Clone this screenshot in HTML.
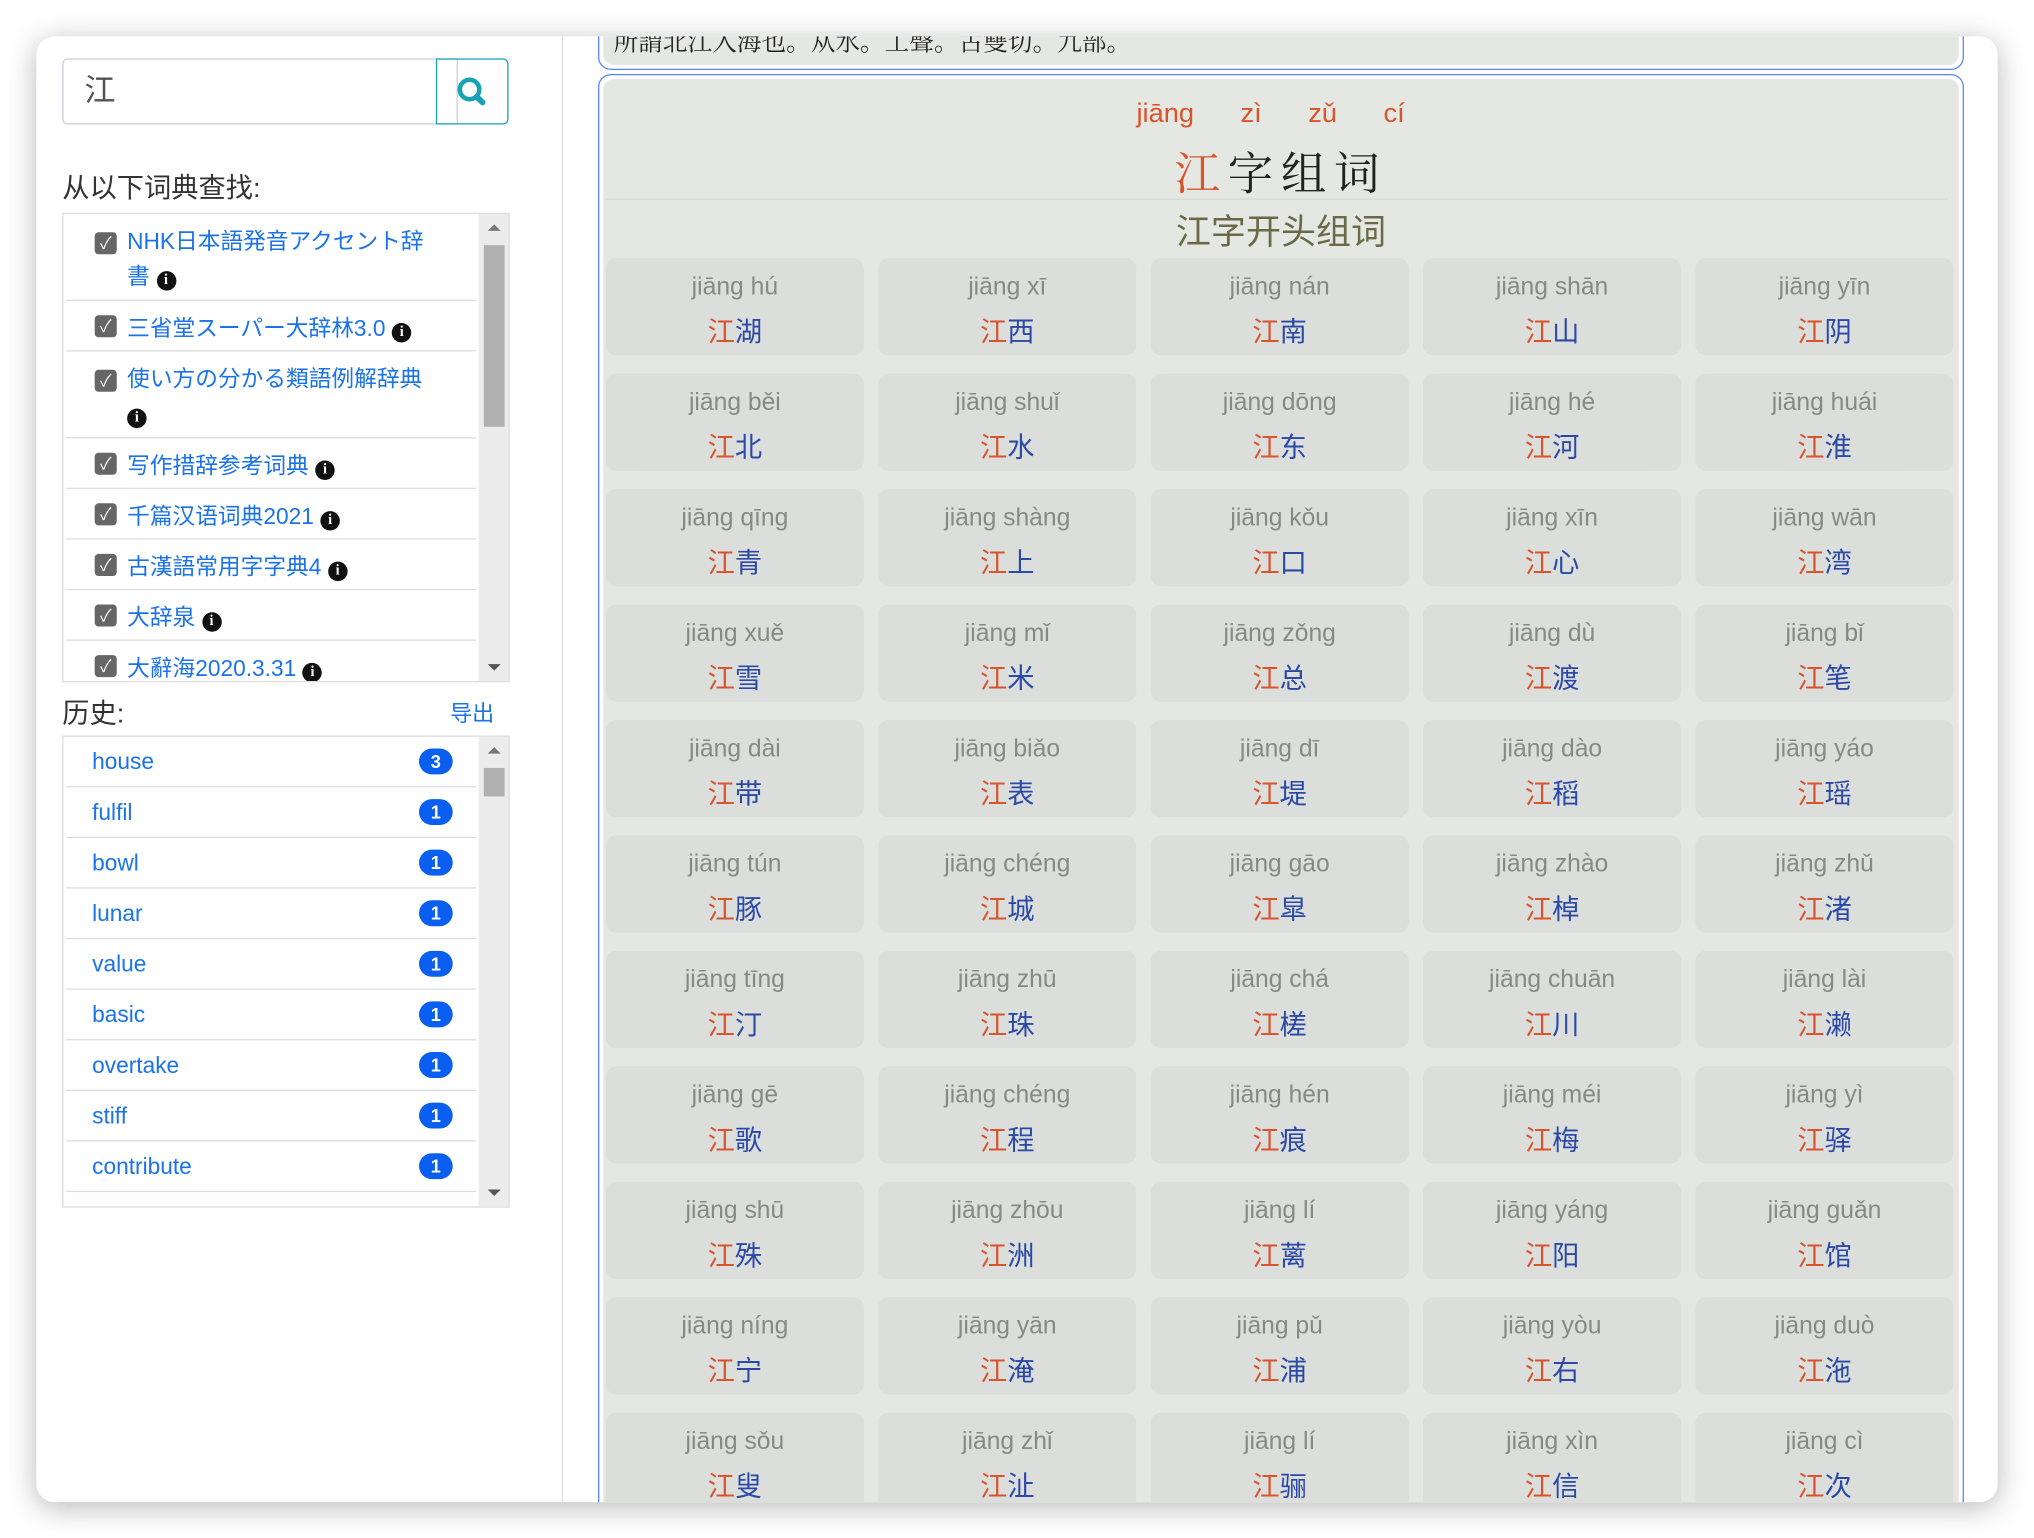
<!DOCTYPE html>
<html><head><meta charset="utf-8">
<style>
html,body{margin:0;padding:0;background:#fff;width:2034px;height:1538px;overflow:hidden}
#s{position:absolute;left:0;top:0;width:1568px;height:1186px;transform:scale(1.29719);transform-origin:0 0;font-family:"Liberation Sans","Noto Sans CJK SC",sans-serif}
.win{position:absolute;left:28px;top:28px;width:1512px;height:1130px;background:#fff;border-radius:14px;box-shadow:0 4px 22px rgba(0,0,0,.28);overflow:hidden}
.left{position:absolute;left:0;top:0;width:405px;height:100%;border-right:1px solid #e2e2e2}
.inp{position:absolute;left:20px;top:17px;width:287px;height:49px;border:1px solid #ccd;border-radius:4px 0 0 4px;font-size:24px;line-height:49px;padding-left:16px;color:#555}
.btn{position:absolute;left:308px;top:17px;width:54px;height:49px;border:1px solid #17a2b8;border-radius:0 4px 4px 0}
.lbl{position:absolute;font-size:21px;color:#333}
.box{position:absolute;left:20px;width:343px;border:1px solid #ddd;background:#fff;overflow:hidden}
.sb{position:absolute;right:0;top:0;width:23px;height:100%;background:#ececec}
.row{position:absolute;left:2px;width:316px;border-bottom:1px solid #ddd;color:#1a73e8;font-size:17.5px}
.cb{position:absolute;left:22px;width:17px;height:17px;background:#666;border-radius:3px;color:#fff;font-size:13px;text-align:center;line-height:17px}
.i{display:inline-block;width:15px;height:15px;border-radius:50%;background:#111;color:#fff;font:bold 11px/15px "Liberation Serif",serif;text-align:center;vertical-align:0px;margin-left:5px}
.bd{position:absolute;left:272px;width:26px;height:20px;border-radius:10px;background:#0a5ef0;color:#fff;font:bold 14px/20px "Liberation Sans",sans-serif;text-align:center}
.card{position:absolute;left:433px;width:1053px;border:1.5px solid #5a86ec;border-radius:10px;background:#fff;padding:3px;box-sizing:border-box}
.in{background:#e5e8e2;border-radius:8px;height:100%;position:relative}
.cell{position:absolute;width:199px;height:75px;background:#dcdedb;border-radius:8px;text-align:center}
.py{position:absolute;top:12px;left:0;right:0;color:#888;font-size:19px}
.w{position:absolute;top:41px;left:0;right:0;font-size:21px;color:#2b4aa8}
.w b{font-weight:normal;color:#d9532c}
</style></head><body><div id="s">
<div class="win">
 <div class="left">
  <div class="inp">江</div>
  <div class="btn"><svg width="54" height="49" viewBox="0 0 54 49"><circle cx="25" cy="23" r="7.5" fill="none" stroke="#17a2b8" stroke-width="3.5"/><line x1="30.5" y1="28.5" x2="35" y2="33" stroke="#17a2b8" stroke-width="4.5" stroke-linecap="round"/></svg></div>
  <div class="lbl" style="left:20px;top:101px">从以下词典查找:</div>
  <div class="box" style="top:136px;height:360px">
   <div class="row" style="top:0;height:66px"><div class="cb" style="top:14px">✓</div><div style="position:absolute;left:47px;top:8px;width:240px;line-height:27px">NHK日本語発音アクセント辞書<span class="i">i</span></div></div>
   <div class="row" style="top:67px;height:38px"><div class="cb" style="top:11px">✓</div><div style="position:absolute;left:47px;top:8px;white-space:nowrap">三省堂スーパー大辞林3.0<span class="i">i</span></div></div>
   <div class="row" style="top:106px;height:66px"><div class="cb" style="top:14px">✓</div><div style="position:absolute;left:47px;top:8px;width:250px;line-height:27px">使い方の分かる類語例解辞典<br><span class="i" style="margin-left:0">i</span></div></div>
   <div class="row" style="top:173px;height:38px"><div class="cb" style="top:11px">✓</div><div style="position:absolute;left:47px;top:8px;white-space:nowrap">写作措辞参考词典<span class="i">i</span></div></div>
   <div class="row" style="top:212px;height:38px"><div class="cb" style="top:11px">✓</div><div style="position:absolute;left:47px;top:8px;white-space:nowrap">千篇汉语词典2021<span class="i">i</span></div></div>
   <div class="row" style="top:251px;height:38px"><div class="cb" style="top:11px">✓</div><div style="position:absolute;left:47px;top:8px;white-space:nowrap">古漢語常用字字典4<span class="i">i</span></div></div>
   <div class="row" style="top:290px;height:38px"><div class="cb" style="top:11px">✓</div><div style="position:absolute;left:47px;top:8px;white-space:nowrap">大辞泉<span class="i">i</span></div></div>
   <div class="row" style="top:329px;height:38px"><div class="cb" style="top:11px">✓</div><div style="position:absolute;left:47px;top:8px;white-space:nowrap">大辭海2020.3.31<span class="i">i</span></div></div>
   <div class="sb"><div style="position:absolute;left:4px;top:24px;width:16px;height:140px;background:#b0b0b0"></div><div style="position:absolute;left:7px;top:8px;border:5px solid transparent;border-bottom:5px solid #777;border-top:0"></div><div style="position:absolute;left:7px;bottom:8px;border:5px solid transparent;border-top:5px solid #555;border-bottom:0"></div></div>
  </div>
  <div class="lbl" style="left:20px;top:506px">历史:</div>
  <div style="position:absolute;left:319px;top:508px;font-size:17px;color:#1a73e8">导出</div>
  <div class="box" style="top:539px;height:362px">
   <div class="row" style="top:0;height:38px"><span style="position:absolute;left:20px;top:9px">house</span><div class="bd" style="top:9px">3</div></div>
   <div class="row" style="top:39px;height:38px"><span style="position:absolute;left:20px;top:9px">fulfil</span><div class="bd" style="top:9px">1</div></div>
   <div class="row" style="top:78px;height:38px"><span style="position:absolute;left:20px;top:9px">bowl</span><div class="bd" style="top:9px">1</div></div>
   <div class="row" style="top:117px;height:38px"><span style="position:absolute;left:20px;top:9px">lunar</span><div class="bd" style="top:9px">1</div></div>
   <div class="row" style="top:156px;height:38px"><span style="position:absolute;left:20px;top:9px">value</span><div class="bd" style="top:9px">1</div></div>
   <div class="row" style="top:195px;height:38px"><span style="position:absolute;left:20px;top:9px">basic</span><div class="bd" style="top:9px">1</div></div>
   <div class="row" style="top:234px;height:38px"><span style="position:absolute;left:20px;top:9px">overtake</span><div class="bd" style="top:9px">1</div></div>
   <div class="row" style="top:273px;height:38px"><span style="position:absolute;left:20px;top:9px">stiff</span><div class="bd" style="top:9px">1</div></div>
   <div class="row" style="top:312px;height:38px"><span style="position:absolute;left:20px;top:9px">contribute</span><div class="bd" style="top:9px">1</div></div>
   <div class="sb"><div style="position:absolute;left:4px;top:24px;width:16px;height:22px;background:#b0b0b0"></div><div style="position:absolute;left:7px;top:8px;border:5px solid transparent;border-bottom:5px solid #777;border-top:0"></div><div style="position:absolute;left:7px;bottom:8px;border:5px solid transparent;border-top:5px solid #555;border-bottom:0"></div></div>
  </div>
 </div>
 <div class="card" style="top:-30px;height:56px"><div class="in"><div style="position:absolute;left:8px;top:16px;font-size:19px;color:#222;font-family:'Noto Serif CJK SC',serif">所謂北江入海也。从水。工聲。古雙切。九部。</div></div></div>
 <div class="card" style="top:29px;height:1140px"><div class="in">
  <div style="position:absolute;left:0;right:16px;top:15px;text-align:center;color:#d9532c;font-size:21px;word-spacing:30px">jiāng zì zǔ cí</div>
  <div style="position:absolute;left:0;right:0;top:46px;text-align:center;font-size:35px;letter-spacing:6px;color:#222;font-family:'Noto Serif CJK SC',serif"><span style="color:#d9532c">江</span>字组词</div>
  <div style="position:absolute;left:2px;right:8px;top:92px;border-top:1px solid #d6d8d3"></div>
  <div style="position:absolute;left:0;right:0;top:96px;text-align:center;font-size:27px;color:#6a6a48">江字开头组词</div>
  <div id="g"></div>
 </div></div>
</div>
</div>
<script>
var d=[["jiāng hú","湖"],["jiāng xī","西"],["jiāng nán","南"],["jiāng shān","山"],["jiāng yīn","阴"],
["jiāng běi","北"],["jiāng shuǐ","水"],["jiāng dōng","东"],["jiāng hé","河"],["jiāng huái","淮"],
["jiāng qīng","青"],["jiāng shàng","上"],["jiāng kǒu","口"],["jiāng xīn","心"],["jiāng wān","湾"],
["jiāng xuě","雪"],["jiāng mǐ","米"],["jiāng zǒng","总"],["jiāng dù","渡"],["jiāng bǐ","笔"],
["jiāng dài","带"],["jiāng biǎo","表"],["jiāng dī","堤"],["jiāng dào","稻"],["jiāng yáo","瑶"],
["jiāng tún","豚"],["jiāng chéng","城"],["jiāng gāo","皐"],["jiāng zhào","棹"],["jiāng zhǔ","渚"],
["jiāng tīng","汀"],["jiāng zhū","珠"],["jiāng chá","槎"],["jiāng chuān","川"],["jiāng lài","濑"],
["jiāng gē","歌"],["jiāng chéng","程"],["jiāng hén","痕"],["jiāng méi","梅"],["jiāng yì","驿"],
["jiāng shū","殊"],["jiāng zhōu","洲"],["jiāng lí","蓠"],["jiāng yáng","阳"],["jiāng guǎn","馆"],
["jiāng níng","宁"],["jiāng yān","淹"],["jiāng pǔ","浦"],["jiāng yòu","右"],["jiāng duò","沲"],
["jiāng sǒu","叟"],["jiāng zhǐ","沚"],["jiāng lí","骊"],["jiāng xìn","信"],["jiāng cì","次"]];
var h="";for(var k=0;k<d.length;k++){var c=k%5,r=Math.floor(k/5);
h+='<div class="cell" style="left:'+(2+c*210)+'px;top:'+(138+r*89)+'px"><div class="py">'+d[k][0]+'</div><div class="w"><b>江</b>'+d[k][1]+'</div></div>';}
document.getElementById("g").innerHTML=h;
</script>
</body></html>
